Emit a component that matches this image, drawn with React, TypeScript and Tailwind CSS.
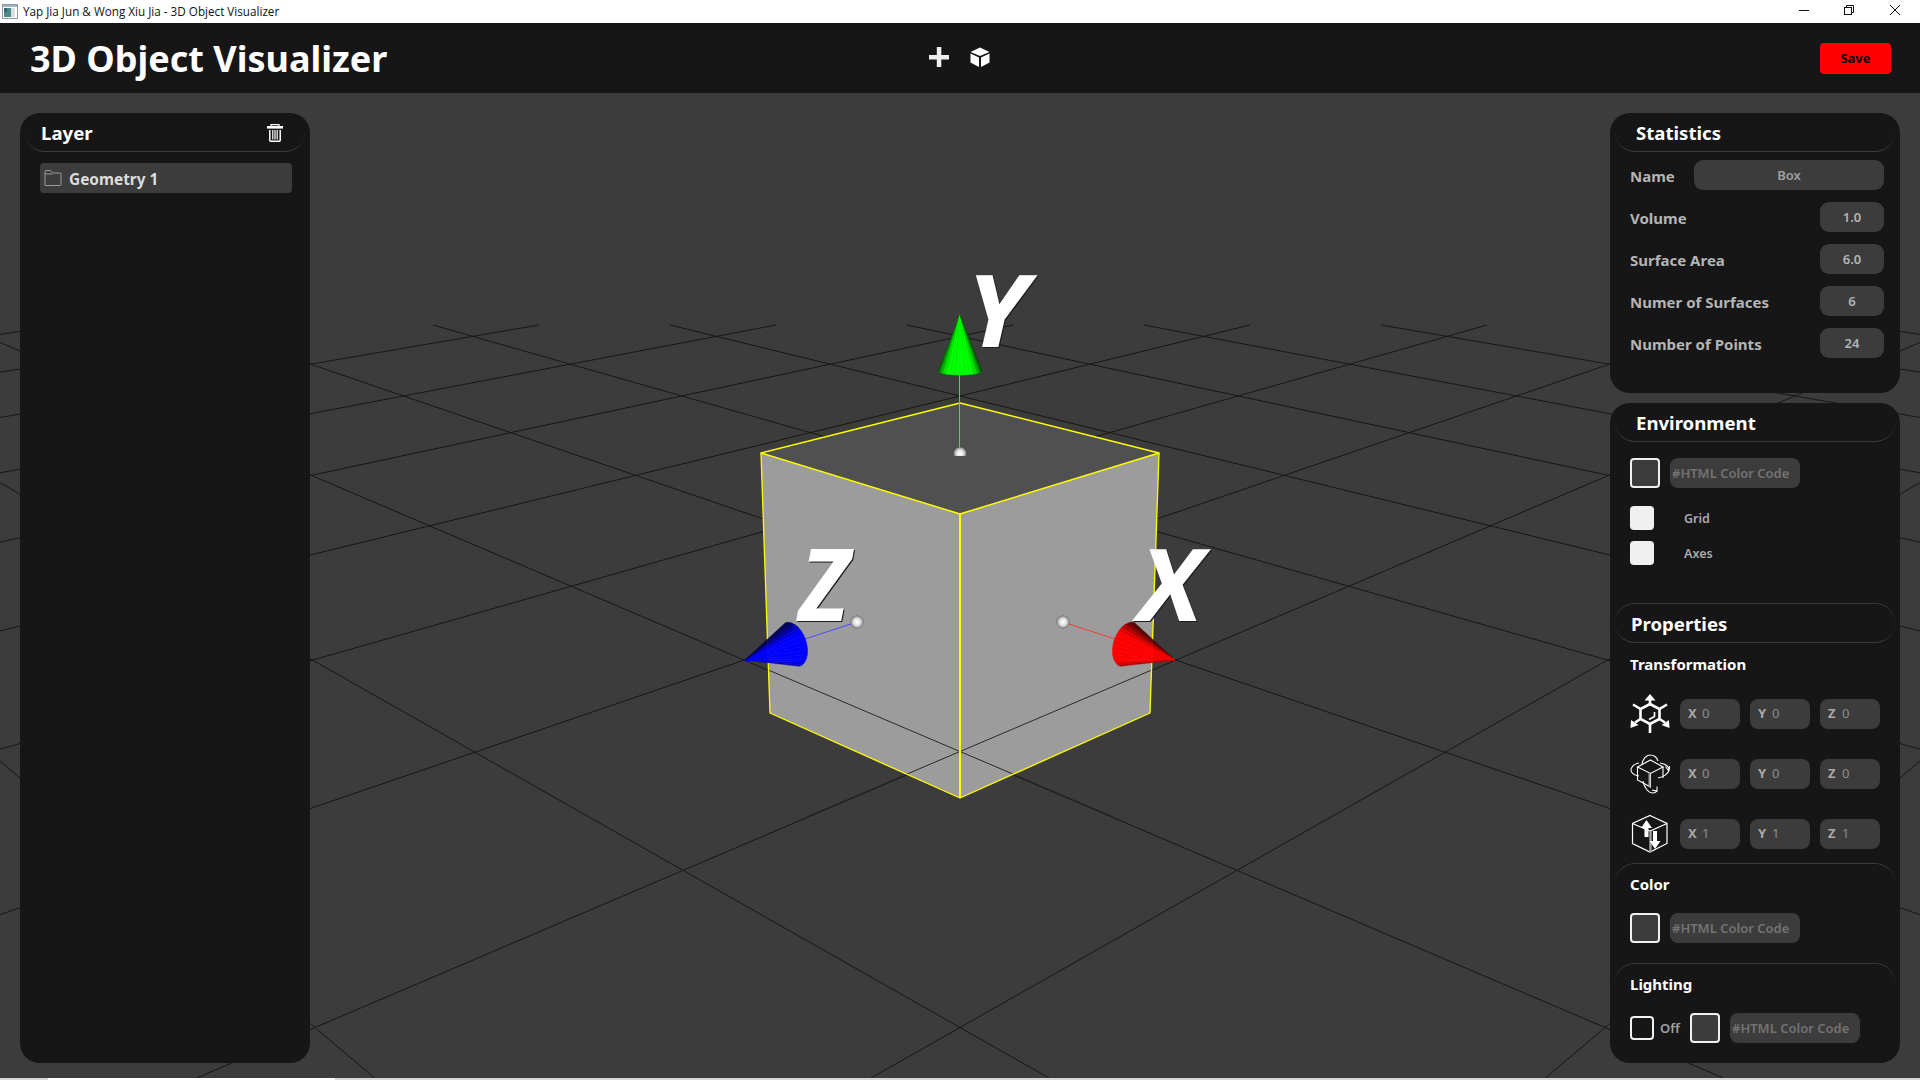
import type { ReactNode } from "react";

// floor grid: lines leave the far edge every 237px and run to a vanishing point
const VP_X = 2917;
const VP_Y = -83;
const FAR_Y = 325;
const FAR_STARTS = [65, 302, 539, 776, 1013, 1250, 1487, 1724, 1961, 2198, 2435, 2672];

function gridLine(start: number) {
  const slope = (FAR_Y - VP_Y) / (VP_X - start);
  const endY = 1078;
  const endX = start - (endY - FAR_Y) / slope;
  return { x1: start, y1: FAR_Y, x2: endX, y2: endY };
}

function FloorGrid() {
  return (
    <g stroke="#141414" strokeWidth="1" opacity="0.9">
      {FAR_STARTS.map((start) => {
        const l = gridLine(start);
        return (
          <g key={start}>
            <line {...l} />
            <line x1={1920 - l.x1} y1={l.y1} x2={1920 - l.x2} y2={l.y2} />
          </g>
        );
      })}
    </g>
  );
}

function Cone({
  tip,
  center,
  halfWidth,
  depth,
  rgb,
  peak,
  spread,
}: {
  tip: [number, number];
  center: [number, number];
  halfWidth: number;
  depth: number;
  rgb: [number, number, number];
  peak: number;
  spread: number;
}) {
  const dx = center[0] - tip[0];
  const dy = center[1] - tip[1];
  const len = Math.hypot(dx, dy);
  const d = [dx / len, dy / len];
  const n = [-d[1], d[0]];
  const steps = 14;
  const point = (t: number) => {
    const a = Math.cos(t) * halfWidth;
    const b = Math.sin(t) * depth;
    return `${center[0] + n[0] * a + d[0] * b},${center[1] + n[1] * a + d[1] * b}`;
  };
  const wedges = [];
  for (let i = 0; i < steps; i++) {
    const t0 = (Math.PI * i) / steps;
    const t1 = (Math.PI * (i + 1)) / steps;
    const mid = (t0 + t1) / 2;
    const light = Math.min(1, Math.max(0.32, 1.6 - Math.abs(mid - peak) * spread));
    const fill = `rgb(${rgb[0] * light},${rgb[1] * light},${rgb[2] * light})`;
    wedges.push(
      <polygon
        key={i}
        points={`${tip[0]},${tip[1]} ${point(t0)} ${point(t1)}`}
        fill={fill}
        stroke={fill}
        strokeWidth="0.4"
      />,
    );
  }
  return <g>{wedges}</g>;
}

function Scene() {
  return (
    <svg
      className="absolute left-0 top-0 h-[985px] w-[1920px]"
      viewBox="0 93 1920 985"
      fill="none"
    >
      <defs>
        <radialGradient id="ball" cx="50%" cy="50%" r="50%">
          <stop offset="0%" stopColor="#ffffff" />
          <stop offset="50%" stopColor="#e4e4e4" />
          <stop offset="82%" stopColor="#a8a8a8" />
          <stop offset="100%" stopColor="#606060" />
        </radialGradient>
        <clipPath id="ballClip">
          <rect x="950" y="440" width="20" height="16" />
        </clipPath>
      </defs>
      <FloorGrid />

      {/* cube */}
      <polygon points="960,403 1159,453 960,514 761,453" fill="#505050" />
      <polygon points="761,453 960,514 960,798 770,713" fill="#9c9c9c" />
      <polygon points="1159,453 960,514 960,798 1150,713" fill="#9c9c9c" />
      {/* floor lines seen through the lower part of the cube */}
      <g stroke="#2a2a2a" strokeWidth="1">
        <line x1="766" y1="669" x2="1114" y2="817" />
        <line x1="1154" y1="669" x2="806" y2="817" />
      </g>
      <g stroke="#ffff00" strokeLinejoin="round">
        <polygon points="960,403 1159,453 960,514 761,453" strokeWidth="1.5" />
        <polyline points="761,453 770,713 960,798 1150,713 1159,453" strokeWidth="1.3" />
        <line x1="960" y1="514" x2="960" y2="798" strokeWidth="2" />
      </g>

      {/* axes */}
      <line x1="959.5" y1="375" x2="959.5" y2="450" stroke="#62c862" strokeWidth="1" />
      <line x1="857" y1="622" x2="805" y2="639" stroke="#4a4aff" strokeWidth="1" />
      <line x1="1063" y1="622" x2="1115" y2="639" stroke="#ff3a3a" strokeWidth="1" />
      <circle cx="960" cy="453.5" r="6.5" fill="url(#ball)" clipPath="url(#ballClip)" />
      <circle cx="857" cy="622" r="6.5" fill="url(#ball)" />
      <circle cx="1063" cy="622" r="6.5" fill="url(#ball)" />

      <Cone tip={[960, 315]} center={[960, 371]} halfWidth={22} depth={4} rgb={[0, 255, 0]} peak={1.57} spread={0.9} />
      <Cone tip={[745, 660]} center={[792.5, 644.5]} halfWidth={23} depth={14} rgb={[0, 0, 255]} peak={1.24} spread={0.8} />
      <Cone tip={[1175, 660]} center={[1127.5, 644.5]} halfWidth={23} depth={14} rgb={[255, 0, 0]} peak={1.9} spread={0.8} />

      {/* axis letters */}
      <g
        fill="#ffffff"
        fontFamily="'Open Sans', sans-serif"
        fontWeight="700"
        fontStyle="italic"
        fontSize="101"
        style={{ filter: "drop-shadow(1px 1px 0 #1c1c1c)" }}
      >
        <text transform="translate(966 347) scale(1.08 1)">Y</text>
        <text transform="translate(799 621) scale(0.93 1)">Z</text>
        <text transform="translate(1138 621) scale(1.055 1)">X</text>
      </g>
    </svg>
  );
}

function WindowButtons() {
  return (
    <svg className="mr-[20px] h-[23px] w-[101px]" viewBox="0 0 101 23" fill="none" stroke="#111111" strokeWidth="1">
      <line x1="0" y1="10.5" x2="10" y2="10.5" />
      <rect x="45.5" y="7.5" width="7" height="7" />
      <path d="M47.5 7.5V5.5H54.5V12.5H52.5" />
      <path d="M91 5L101 15M101 5L91 15" />
    </svg>
  );
}

function AppIcon() {
  return (
    <svg className="ml-[2px] h-[15px] w-[16px]" viewBox="0 0 16 15">
      <rect x="0.5" y="0.5" width="15" height="14" fill="#ffffff" stroke="#8f9aa3" />
      <rect x="1" y="1" width="14" height="2" fill="#9fb4c4" />
      <rect x="2" y="4" width="7" height="9" fill="#4f8a86" />
      <rect x="9" y="4" width="4" height="9" fill="#d9dfe2" />
      <rect x="2" y="4" width="3" height="4" fill="#2e6a7e" />
    </svg>
  );
}

function PlusIcon() {
  return (
    <svg className="h-5 w-5" viewBox="0 0 20 20" fill="#f0f0f0">
      <rect x="0" y="8" width="20" height="4.5" />
      <rect x="7.8" y="0" width="4.5" height="20" />
    </svg>
  );
}

function BoxIcon() {
  return (
    <svg className="h-5 w-5" viewBox="0 0 20 20">
      <polygon points="10,0.5 19.5,5 10,9 0.5,5" fill="#ffffff" />
      <polygon points="0.5,6.5 9,10.5 9,20 0.5,15.5" fill="#ffffff" />
      <polygon points="19.5,6.5 11,10.5 11,20 19.5,15.5" fill="#ffffff" />
    </svg>
  );
}

function TrashIcon() {
  return (
    <svg className="h-[18px] w-4" viewBox="0 0 16 18" fill="none">
      <path d="M4 2V0.6H12V2" stroke="#ffffff" strokeWidth="1.2" />
      <rect x="0" y="2" width="16" height="2.6" fill="#ffffff" />
      <path d="M2.8 6V16.5C2.8 17 3.1 17.2 3.6 17.2H12.4C12.9 17.2 13.2 17 13.2 16.5V6" stroke="#ffffff" strokeWidth="1.5" />
      <path d="M5.8 6V15.5M8 6V15.5M10.2 6V15.5" stroke="#ffffff" strokeWidth="1.2" />
    </svg>
  );
}

function FolderIcon() {
  return (
    <svg className="h-[18px] w-[18px]" viewBox="0 0 18 18" fill="none" stroke="#9a9a9a" strokeWidth="1">
      <path d="M1 16.5V2.5C1 1.8 1.5 1.5 2 1.5H6.5L8.5 4H16C16.6 4 17 4.4 17 5V15.5C17 16.2 16.6 16.5 16 16.5Z" />
      <path d="M1 5H8.5" />
    </svg>
  );
}

function TranslateIcon() {
  return (
    <svg className="h-10 w-10" viewBox="0 0 40 40" fill="none" stroke="#ffffff" strokeWidth="2.6">
      <polygon points="20,10 29.5,15 29.5,25 20,30 10.5,25 10.5,15" />
      <path d="M20 10V4M29.5 15L37 10.5M10.5 15L3 10.5M20 30V39M29.5 25L35 28.5M10.5 25L5 28.5" />
      <path d="M24.5 18V22.5L19 25.5" strokeWidth="1.6" />
      <g fill="#ffffff" stroke="none">
        <polygon points="20,0 25.5,6.5 14.5,6.5" />
        <polygon points="0.5,34 1,26 8.5,31" />
        <polygon points="39.5,34 39,26 31.5,31" />
      </g>
    </svg>
  );
}

function RotateIcon() {
  return (
    <svg className="h-10 w-10" viewBox="0 0 40 40" fill="none" stroke="#ffffff" strokeWidth="1.1">
      <path d="M20.5 6L33 13L20.5 19.5L7.5 13Z" />
      <path d="M7.5 13V26L20.5 33V19.5M33 13V24" />
      <path d="M19.5 19.5V33" stroke="#a0a0a0" strokeWidth="2" />
      <path d="M9 22C2 21 0 17 1.5 14C3 11 6 9.5 9 9" />
      <path d="M30 9C36 10 39.5 13 39 16C38.5 20 33 23 28 24" />
      <path d="M35.5 12.5L38.7 17L39.7 12" />
      <path d="M12 11C12 6 16 1 20 1C24 1 27 4 28 7" />
      <path d="M13 27C14 33 18 39 23 39C25 39 26 38 27 37" />
      <path d="M22 36L27 37L27 32.5" />
    </svg>
  );
}

function ScaleIcon() {
  return (
    <svg className="h-10 w-10" viewBox="0 0 40 40" fill="none" stroke="#ffffff" strokeWidth="1.2">
      <path d="M20 1.5L37 9.5V29.5L20 38L2.5 29.5V9.5Z" />
      <path d="M2.5 9.5L20 17L37 9.5" />
      <path d="M20.5 17V38" stroke="#a0a0a0" strokeWidth="2.4" />
      <g fill="#ffffff" stroke="none">
        <polygon points="16.5,6 22,14 18.5,14 18.5,23 14.5,23 14.5,14 11,14" />
        <polygon points="25,35 19.5,27 23,27 23,17 27,17 27,27 30.5,27" />
      </g>
    </svg>
  );
}

function PanelTitle({ children }: { children: ReactNode }) {
  return (
    <div className="mx-[5px] flex h-[39px] items-center justify-between rounded-b-[20px] border-b border-[#3a3a3a] pl-[21px] pr-[22px] pt-[2px] text-[18.6px] font-bold text-white">
      {children}
    </div>
  );
}

function StatRow({ label, value }: { label: string; value: string }) {
  return (
    <div className="flex h-[30px] items-center justify-between">
      <span className="pt-[2px] text-[15px] font-bold text-[#b4b4b4]">{label}</span>
      <span className="flex h-[30px] w-[64px] items-center justify-center rounded-[9px] bg-[#3c3c3c] pt-[1px] text-[13px] font-semibold text-[#b4b4b4]">
        {value}
      </span>
    </div>
  );
}

function ColorField({ className = "" }: { className?: string }) {
  return (
    <div className={`flex h-[30px] items-center gap-[10px] ${className}`}>
      <span className="h-[30px] w-[30px] rounded-[4px] border-2 border-[#f0f0f0] bg-[#3c3c3c]" />
      <span className="flex h-[30px] w-[130px] items-center rounded-[8px] bg-[#3c3c3c] pl-[2px] pt-[1px] text-[13px] font-semibold text-[#737373]">
        #HTML Color Code
      </span>
    </div>
  );
}

function Toggle({ label }: { label: string }) {
  return (
    <div className="flex h-[24px] items-center">
      <span className="h-[24px] w-[24px] rounded-[4px] bg-[#f0f0f0]" />
      <span className="ml-[30px] pt-[2px] text-[12.5px] font-semibold text-[#aaaaaa]">{label}</span>
    </div>
  );
}

function AxisInput({ axis, value }: { axis: string; value: string }) {
  return (
    <span className="flex h-[30px] w-[60px] items-center rounded-[8px] bg-[#3c3c3c] pl-[8px] text-[13px]">
      <span className="w-[14px] font-bold text-[#a8a8a8]">{axis}</span>
      <span className="font-normal text-[#8c8c8c]">{value}</span>
    </span>
  );
}

function TransformRow({ icon, value }: { icon: ReactNode; value: string }) {
  return (
    <div className="flex h-[30px] items-center">
      <span className="flex w-[50px] items-center">{icon}</span>
      <div className="flex gap-[10px]">
        <AxisInput axis="X" value={value} />
        <AxisInput axis="Y" value={value} />
        <AxisInput axis="Z" value={value} />
      </div>
    </div>
  );
}

export default function App() {
  return (
    <div className="flex h-[1080px] w-[1920px] flex-col overflow-hidden bg-[#3c3c3c] font-['Noto_Sans',sans-serif]">
      <div className="flex h-[23px] shrink-0 items-center justify-between bg-white">
        <div className="flex items-center gap-[5px] font-['Open_Sans',sans-serif] text-[11.7px] text-[#111111]">
          <AppIcon />
          <span>Yap Jia Jun &amp; Wong Xiu Jia - 3D Object Visualizer</span>
        </div>
        <WindowButtons />
      </div>

      <header className="relative flex h-[70px] shrink-0 items-center justify-between bg-[#161616] pl-[30px] pr-[29px]">
        <h1 className="pt-[2px] text-[36px] font-bold leading-none text-white">3D Object Visualizer</h1>
        <div className="absolute left-[929px] top-[24px] flex gap-[21px]">
          <PlusIcon />
          <BoxIcon />
        </div>
        <button className="h-[31px] w-[71px] rounded-[4px] bg-[#ff0000] pt-[2px] text-[13px] font-bold text-black">Save</button>
      </header>

      <main className="relative flex min-h-0 flex-1 justify-between px-[20px] pb-[15px] pt-[20px]">
        <Scene />

        <aside className="relative w-[290px] rounded-[20px] bg-[#161616]">
          <PanelTitle>
            <span className="-ml-[5px]">Layer</span>
            <TrashIcon />
          </PanelTitle>
          <div className="mx-[20px] mt-[11px] flex h-[30px] w-[252px] items-center gap-[7px] rounded-[4px] bg-[#3c3c3c] pl-[4px] text-[15.4px] font-bold text-[#dcdcdc]">
            <FolderIcon />
            <span className="pt-[3px]">Geometry 1</span>
          </div>
        </aside>

        <div className="relative flex w-[290px] flex-col gap-[10px]">
          <section className="h-[280px] rounded-[20px] bg-[#161616]">
            <PanelTitle>Statistics</PanelTitle>
            <div className="flex flex-col gap-[12px] pl-[20px] pr-[16px] pt-[8px]">
              <div className="flex h-[30px] items-center justify-between">
                <span className="pt-[2px] text-[15px] font-bold text-[#b4b4b4]">Name</span>
                <span className="flex h-[30px] w-[190px] items-center justify-center rounded-[9px] bg-[#3c3c3c] pt-[1px] text-[13px] font-semibold text-[#a0a0a0]">
                  Box
                </span>
              </div>
              <StatRow label="Volume" value="1.0" />
              <StatRow label="Surface Area" value="6.0" />
              <StatRow label="Numer of Surfaces" value="6" />
              <StatRow label="Number of Points" value="24" />
            </div>
          </section>

          <section className="min-h-0 flex-1 rounded-[20px] bg-[#161616]">
            <PanelTitle>Environment</PanelTitle>
            <div className="pl-[20px] pt-[16px]">
              <ColorField />
              <div className="mt-[18px] flex flex-col gap-[11px]">
                <Toggle label="Grid" />
                <Toggle label="Axes" />
              </div>
            </div>

            <div className="mx-[5px] mt-[38px] flex h-[40px] items-center rounded-[20px] border-y border-[#3a3a3a] pl-[16px] pt-[1px] text-[18.6px] font-bold text-white">
              Properties
            </div>

            <div className="pl-[20px] pt-[11px]">
              <p className="h-[20px] text-[15px] font-bold leading-[20px] text-white">Transformation</p>
              <div className="mt-[25px] flex flex-col gap-[30px]">
                <TransformRow icon={<TranslateIcon />} value="0" />
                <TransformRow icon={<RotateIcon />} value="0" />
                <TransformRow icon={<ScaleIcon />} value="1" />
              </div>
            </div>

            <div className="mx-[5px] mt-[14px] h-[100px] rounded-t-[20px] border-t border-[#3a3a3a] pl-[15px] pt-[10px]">
              <p className="h-[20px] text-[15px] font-bold leading-[20px] text-white">Color</p>
              <ColorField className="mt-[19px]" />
            </div>

            <div className="mx-[5px] rounded-t-[20px] border-t border-[#3a3a3a] pl-[15px] pt-[10px]">
              <p className="h-[20px] text-[15px] font-bold leading-[20px] text-white">Lighting</p>
              <div className="mt-[19px] flex items-center">
                <span className="h-[24px] w-[24px] rounded-[4px] border-2 border-[#f0f0f0]" />
                <span className="ml-[6px] w-[30px] pt-[2px] text-[13px] font-semibold text-[#a0a0a0]">Off</span>
                <ColorField />
              </div>
            </div>
          </section>
        </div>
      </main>

      <div className="flex h-[2px] shrink-0 bg-[#d8d8d8]">
        <span className="ml-[48px] h-[2px] w-[287px] bg-white" />
      </div>
    </div>
  );
}
